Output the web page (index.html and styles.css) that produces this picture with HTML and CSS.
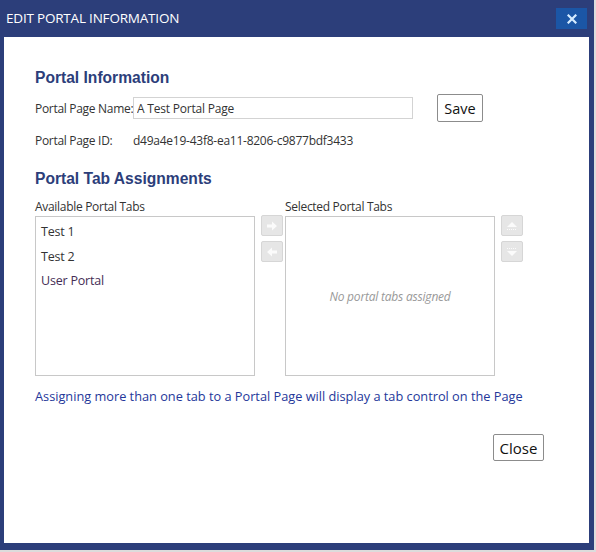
FILE: index.html
```html
<!DOCTYPE html>
<html>
<head>
<meta charset="utf-8">
<link rel="stylesheet" href="styles.css">
</head>
<body>
<div class="dialog">
  <div class="titlebar">
    <span class="title">EDIT PORTAL INFORMATION</span>
    <button class="x-btn" aria-label="Close">
      <svg width="10" height="10" viewBox="0 0 10 10"><path d="M1.5 1.5 L8.5 8.5 M8.5 1.5 L1.5 8.5" stroke="#d6ecff" stroke-width="2.2" stroke-linecap="square"/></svg>
    </button>
  </div>
  <div class="content">
    <h2 class="section-title">Portal Information</h2>
    <div class="name-row">
      <label class="field-label">Portal Page Name:</label>
      <input class="text-input" type="text" value="A Test Portal Page">
      <button class="btn btn-save">Save</button>
    </div>
    <div class="id-row">
      <span class="field-label">Portal Page ID:</span>
      <span class="id-value">d49a4e19-43f8-ea11-8206-c9877bdf3433</span>
    </div>
    <h2 class="section-title section-title-2">Portal Tab Assignments</h2>
    <div class="assign">
      <div class="col">
        <div class="list-label">Available Portal Tabs</div>
        <div class="listbox">
          <div class="item">Test 1</div>
          <div class="item">Test 2</div>
          <div class="item item-purple">User Portal</div>
        </div>
      </div>
      <div class="btn-col">
        <div class="mini-btn">
          <svg width="12" height="10" viewBox="0 0 12 10"><path d="M1 3.5 H6 V0.5 L11 5 L6 9.5 V6.5 H1 Z" fill="#fbfbfb"/></svg>
        </div>
        <div class="mini-btn">
          <svg width="12" height="10" viewBox="0 0 12 10"><path d="M11 3.5 H6 V0.5 L1 5 L6 9.5 V6.5 H11 Z" fill="#fbfbfb"/></svg>
        </div>
      </div>
      <div class="col col-right">
        <div class="list-label">Selected Portal Tabs</div>
        <div class="listbox listbox-empty">
          <span class="empty">No portal tabs assigned</span>
        </div>
      </div>
      <div class="btn-col btn-col-right">
        <div class="mini-btn">
          <svg width="14" height="10" viewBox="0 0 14 10"><path d="M2 6 L7 1 L12 6 Z" fill="#fbfbfb"/><path d="M2 8.5 H12" stroke="#fbfbfb" stroke-width="1" stroke-dasharray="1 1"/></svg>
        </div>
        <div class="mini-btn">
          <svg width="14" height="10" viewBox="0 0 14 10"><path d="M2 4 L7 9 L12 4 Z" fill="#fbfbfb"/><path d="M2 1.5 H12" stroke="#fbfbfb" stroke-width="1" stroke-dasharray="1 1"/></svg>
        </div>
      </div>
    </div>
    <p class="info">Assigning more than one tab to a Portal Page will display a tab control on the Page</p>
    <div class="footer">
      <button class="btn btn-close">Close</button>
    </div>
  </div>
</div>
</body>
</html>
```

FILE: styles.css
```css
html, body {
  margin: 0;
  padding: 0;
}
body {
  background: #dcdcdc;
  font-family: "Open Sans", "Noto Sans", sans-serif;
  color: #333;
  width: 596px;
  height: 552px;
}
.dialog {
  width: 594px;
  height: 550px;
  background: #2c3e7a;
  display: flex;
  flex-direction: column;
}
.titlebar {
  height: 37px;
  flex: none;
  display: flex;
  align-items: flex-start;
  justify-content: space-between;
}
.title {
  color: #fff;
  font-size: 13.5px;
  line-height: 18px;
  margin: 9px 0 0 6px;
  letter-spacing: -0.2px;
}
.x-btn {
  width: 31px;
  height: 21px;
  margin: 8px 7px 0 0;
  padding: 0;
  border: none;
  background: #1b56a6;
  display: flex;
  align-items: center;
  justify-content: center;
}
.content {
  flex: 1;
  background: #fff;
  margin: 0 5px 7px 4px;
  padding: 31px 0 0 31px;
  display: flex;
  flex-direction: column;
}
.section-title {
  margin: 0;
  font-family: "Liberation Sans", Arial, sans-serif;
  font-weight: bold;
  font-size: 15.6px;
  line-height: 20px;
  color: #2c3e7a;
}
.name-row {
  display: flex;
  align-items: center;
  margin-top: 6px;
  height: 28px;
}
.field-label {
  width: 98px;
  flex: none;
  font-size: 12px;
  white-space: nowrap;
  letter-spacing: -0.3px;
}
.text-input {
  width: 280px;
  height: 22px;
  box-sizing: border-box;
  border: 1px solid #d3d3d3;
  padding: 0 3px;
  font-family: inherit;
  font-size: 12px;
  color: #333;
  outline: none;
  letter-spacing: -0.2px;
}
.btn {
  background: #fff;
  border: 1px solid #8c8c8c;
  border-radius: 2px;
  font-family: inherit;
  color: #111;
  padding: 0;
}
.btn-save {
  margin-left: 24px;
  width: 46px;
  height: 28px;
  font-size: 14.5px;
}
.id-row {
  display: flex;
  align-items: center;
  margin-top: 9px;
  height: 18px;
}
.id-value {
  font-size: 12px;
  letter-spacing: -0.25px;
}
.section-title-2 {
  margin-top: 20px;
}
.assign {
  display: flex;
  align-items: flex-start;
  margin-top: 10px;
}
.col {
  display: flex;
  flex-direction: column;
}
.list-label {
  font-size: 12px;
  line-height: 16px;
  height: 16px;
  margin-bottom: 1px;
  letter-spacing: -0.3px;
}
.listbox {
  width: 220px;
  height: 160px;
  box-sizing: border-box;
  border: 1px solid #c8c8c8;
  padding-top: 3px;
}
.item {
  font-size: 12.5px;
  line-height: 24.5px;
  padding-left: 5px;
  color: #333;
  letter-spacing: -0.2px;
}
.item-purple {
  color: #452d55;
}
.btn-col {
  display: flex;
  flex-direction: column;
  gap: 5px;
  margin: 16px 2px 0 6px;
}
.btn-col-right {
  margin: 16px 0 0 6px;
}
.mini-btn {
  width: 22px;
  height: 21px;
  box-sizing: border-box;
  background: #e6e6e6;
  border: 1px solid #d6d6d6;
  border-radius: 2px;
  display: flex;
  align-items: center;
  justify-content: center;
}
.listbox-empty {
  width: 210px;
  padding-top: 0;
  display: flex;
  align-items: center;
  justify-content: center;
}
.empty {
  font-style: italic;
  font-size: 12px;
  color: #999;
  letter-spacing: -0.2px;
}
.info {
  margin: 12px 0 0 0;
  font-size: 12.75px;
  line-height: 16px;
  color: #24379a;
}
.footer {
  display: flex;
  justify-content: flex-end;
  margin-top: 30px;
  padding-right: 45px;
}
.btn-close {
  width: 51px;
  height: 27px;
  font-size: 15px;
}
```
